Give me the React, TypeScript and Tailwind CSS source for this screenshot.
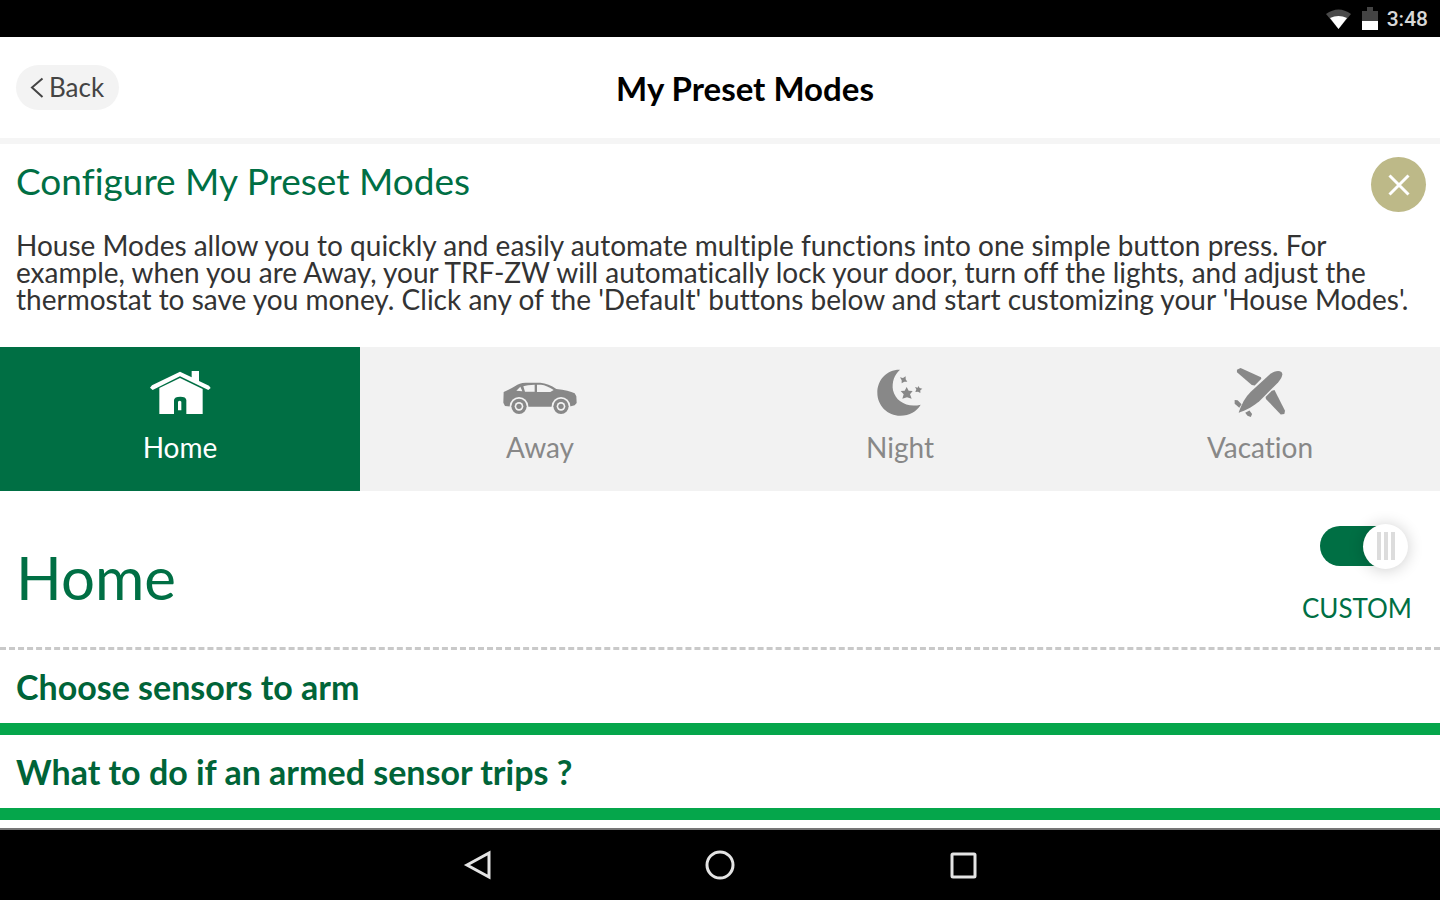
import { useState } from "react";
import type { ReactNode } from "react";

function HomeIcon() {
  return (
    <svg viewBox="60 88 183 135" className="h-[45px] w-[61px]" fill="currentColor" aria-hidden="true">
      <path d="M60 141 L66 134 L150 93 L185 110 V91 H207 V121 L237 135 L242 142 L235 148 L150 107 L68 148 Z" />
      <path d="M88 142 L150 112 L218 145 V220 H169 V178 Q168 168 151 168 Q133 168 132 178 V220 H88 Z" />
      <path d="M144 183 Q149 178 154 183 V209 H144 Z" />
    </svg>
  );
}

function CarIcon() {
  return (
    <svg viewBox="70 28 225 135" className="h-[45px] w-[75px]" aria-hidden="true">
      <path
        fill="currentColor"
        d="M72 94 Q92 85 107 76 Q118 67 138 66 H182 Q207 68 230 85 Q268 89 285 98 L290 107 L291 127 L285 134 L268 138 H96 L76 136 L71 126 Z"
      />
      <path fill="#f2f2f2" d="M110 90 L122 78 L128 92 Z M131 77 Q142 72 165 72 V93 H136 Z M172 72 H184 Q202 74 222 88 L212 94 H172 Z" />
      <circle cx="118" cy="137" r="28" fill="#f2f2f2" />
      <circle cx="118" cy="137" r="23" fill="currentColor" />
      <circle cx="118" cy="137" r="13" fill="#f2f2f2" />
      <circle cx="118" cy="137" r="8" fill="currentColor" />
      <circle cx="244" cy="137" r="28" fill="#f2f2f2" />
      <circle cx="244" cy="137" r="23" fill="currentColor" />
      <circle cx="244" cy="137" r="13" fill="#f2f2f2" />
      <circle cx="244" cy="137" r="8" fill="currentColor" />
    </svg>
  );
}

function MoonIcon() {
  return (
    <svg viewBox="81 38 138 141" className="h-[47px] w-[46px]" fill="currentColor" aria-hidden="true">
      <path d="M150 40 C111 39 82 70 82 109 C82 148 113 178 151 178 C179 178 200 165 212 145 C172 155 137 136 129 102 C125 77 133 55 150 40 Z" />
      <path d="M170 92 L176 103 L188 104 L180 114 L185 127 L171 123 L157 127 L161 114 L152 104 L164 103 Z" />
      <path d="M150 63 L159 65 L167 60 L167 69 L172 76 L163 76 L155 81 L155 72 Z" />
      <path d="M205 89 L209 95 L217 97 L211 102 L211 110 L204 106 L196 107 L199 99 L195 92 L203 94 Z" />
    </svg>
  );
}

function PlaneIcon() {
  return (
    <svg viewBox="133 36 158 153" className="h-[51px] w-[52px]" fill="currentColor" aria-hidden="true">
      <path d="M277 50 C270 44 255 47 243 56 L184 110 C168 126 155 148 147 174 C172 166 194 153 210 139 L267 82 C279 68 283 56 277 50 Z" />
      <path d="M142 43 L153 38 L215 66 L216 71 L196 91 L187 90 L142 51 Z" />
      <path d="M256 105 L288 168 L286 178 L275 179 L230 132 L229 126 L248 107 Z" />
      <path d="M135 135 L144 136 L156 148 L149 159 L135 147 Z M167 174 L180 167 L188 178 L184 187 L174 183 Z" />
    </svg>
  );
}

const modes: { name: string; icon: ReactNode }[] = [
  { name: "Home", icon: <HomeIcon /> },
  { name: "Away", icon: <CarIcon /> },
  { name: "Night", icon: <MoonIcon /> },
  { name: "Vacation", icon: <PlaneIcon /> },
];

const sections = ["Choose sensors to arm", "What to do if an armed sensor trips ?"];

export default function App() {
  const [mode, setMode] = useState("Home");
  const [custom, setCustom] = useState(true);

  return (
    <div className="flex min-h-screen flex-col bg-white font-['Lato','Open_Sans',sans-serif] text-[#333] [font-variant-ligatures:none]">
      <div className="flex h-[37px] items-center justify-end bg-black pr-3 text-white">
        <svg viewBox="0 0 25 20" className="h-5 w-[25px]" aria-hidden="true">
          <path d="M0 5 Q12.500 -4 25 5 L12.500 20 Z" fill="#4a4a4a" />
          <path d="M4 9 Q12.500 5 21 9 L12.500 20 Z" fill="#fff" />
        </svg>
        <svg viewBox="0 0 16 23" className="ml-[11px] h-[23px] w-4" aria-hidden="true">
          <path d="M0 4 H5 V0 H11 V4 H16 V23 H0 Z" fill="#444" />
          <path d="M0 14 H16 V23 H0 Z" fill="#fff" />
        </svg>
        <time className="ml-[9px] font-['Roboto',sans-serif] text-[21px] leading-6 font-medium text-[#d8d8d8]">3:48</time>
      </div>

      <header className="grid h-[107px] grid-cols-[1fr_auto_1fr] items-center border-b-[6px] border-[#f5f5f5] px-4">
        <button
          type="button"
          className="flex h-[45px] w-[103px] items-center gap-[5px] rounded-full bg-[#f3f3f3] pl-[14px] text-[26px] text-[#444]"
        >
          <svg viewBox="0 0 14 22" className="h-[22px] w-[14px]" fill="none" stroke="currentColor" strokeWidth="2" aria-hidden="true">
            <path d="M12.500 1.500 L2 10.500 L12.500 20" />
          </svg>
          Back
        </button>
        <h1 className="pl-[50px] text-[33px] leading-10 font-bold text-black">My Preset Modes</h1>
      </header>

      <main className="flex-1">
        <section className="h-[203px] px-4">
          <div className="flex items-start justify-between pt-[13px]">
            <h2 className="pt-1 text-[37px] leading-10 text-[#006f44]">Configure My Preset Modes</h2>
            <button
              type="button"
              aria-label="Close"
              className="-mr-[2px] flex size-[55px] items-center justify-center rounded-full bg-[#bdb988] text-white"
            >
              <svg viewBox="0 0 22 22" className="size-[22px]" stroke="currentColor" strokeWidth="3" aria-hidden="true">
                <path d="M1.500 1.500 L20.500 20.500 M20.500 1.500 L1.500 20.500" />
              </svg>
            </button>
          </div>
          <p className="pt-5 text-[28px] leading-[27px] whitespace-nowrap">
            House Modes allow you to quickly and easily automate multiple functions into one simple button press. For
            <br />
            example, when you are Away, your TRF-ZW will automatically lock your door, turn off the lights, and adjust the
            <br />
            thermostat to save you money. Click any of the 'Default' buttons below and start customizing your 'House Modes'.
          </p>
        </section>

        <div role="tablist" aria-label="House modes" className="grid h-36 grid-cols-4 bg-[#f2f2f2]">
          {modes.map((m) => (
            <button
              key={m.name}
              type="button"
              role="tab"
              aria-selected={mode === m.name}
              onClick={() => setMode(m.name)}
              className={
                mode === m.name
                  ? "flex flex-col items-center bg-[#006f44] pt-[19px] text-white"
                  : "flex flex-col items-center pt-[19px] text-[#888]"
              }
            >
              <span className="flex h-[52px] items-center">{m.icon}</span>
              <span className="mt-[11px] text-[28px] leading-9">{m.name}</span>
            </button>
          ))}
        </div>

        <section className="flex h-[159px] justify-between border-b-[3px] border-dashed border-[#c9c9c9] px-4">
          <h2 className="pt-[51px] text-[60px] leading-[70px] text-[#006f44]">{mode}</h2>
          <label className="flex flex-col items-end pt-[35px] pr-3 text-[#006f44]">
            <input
              type="checkbox"
              role="switch"
              checked={custom}
              onChange={() => setCustom(!custom)}
              className="peer sr-only"
            />
            <span className="mr-3 flex h-10 w-20 items-center justify-end rounded-full bg-[#006f44] peer-focus-visible:outline-2">
              <span className="-mr-2 flex size-[45px] items-center justify-center gap-[3px] rounded-full bg-white shadow-[0_1px_16px_rgba(0,0,0,0.2)]">
                <span className="h-7 w-1 bg-[#dcdcdc]" />
                <span className="h-7 w-1 bg-[#dcdcdc]" />
                <span className="h-7 w-1 bg-[#dcdcdc]" />
              </span>
            </span>
            <span className="mt-6 text-[26px] leading-9">CUSTOM</span>
          </label>
        </section>

        {sections.map((s) => (
          <button
            key={s}
            type="button"
            className="flex h-[85px] w-full items-center border-b-[12px] border-[#05a64b] px-4 text-left text-[34px] leading-10 font-bold text-[#006438]"
          >
            {s}
          </button>
        ))}
      </main>

      <nav aria-label="System" className="flex h-[72px] items-center justify-center gap-[213px] border-t-2 border-[#777] bg-black text-[#e4e4e4]">
        <button type="button" aria-label="Back" className="size-[30px]">
          <svg viewBox="0 0 30 30" className="size-[30px]" fill="none" stroke="currentColor" strokeWidth="3">
            <path d="M5 15 L27 3 V27 Z" />
          </svg>
        </button>
        <button type="button" aria-label="Home" className="size-[30px]">
          <svg viewBox="0 0 30 30" className="size-[30px]" fill="none" stroke="currentColor" strokeWidth="3">
            <circle cx="15" cy="15" r="13" />
          </svg>
        </button>
        <button type="button" aria-label="Recent apps" className="size-[30px]">
          <svg viewBox="0 0 30 30" className="size-[30px]" fill="none" stroke="currentColor" strokeWidth="3">
            <rect x="4" y="4" width="23" height="23" rx="1" />
          </svg>
        </button>
      </nav>
    </div>
  );
}
